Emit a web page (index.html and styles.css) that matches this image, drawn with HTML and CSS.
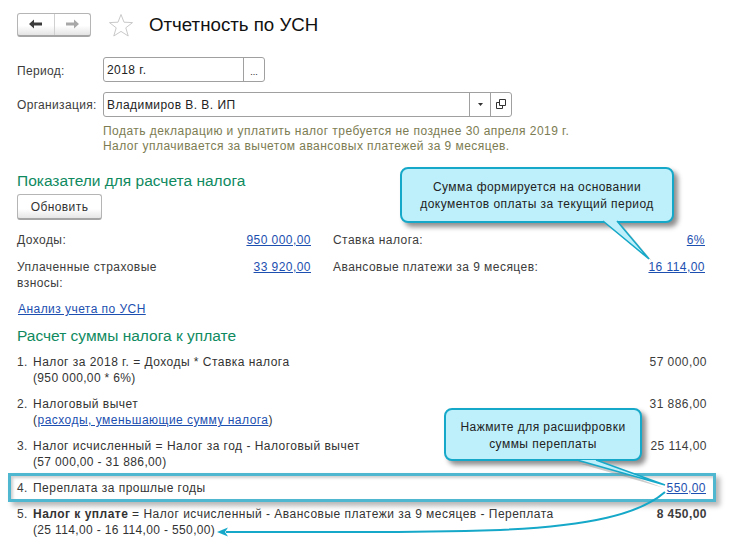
FILE: index.html
```html
<!DOCTYPE html>
<html lang="ru">
<head>
<meta charset="utf-8">
<title>Отчетность по УСН</title>
<link rel="stylesheet" href="styles.css">
</head>
<body>
<div class="page">
  <header class="head">
    <div class="nav">
      <span class="nav-cell">
        <svg width="16" height="12" viewBox="0 0 16 12"><path d="M1 6 L6 1.500 V4.500 H14 V7.500 H6 V10.500 Z" fill="#3a3a3a"/></svg>
      </span>
      <span class="nav-cell">
        <svg width="16" height="12" viewBox="0 0 16 12"><path d="M15 6 L10 1.500 V4.500 H2 V7.500 H10 V10.500 Z" fill="#a8a8a8"/></svg>
      </span>
    </div>
    <svg class="star" width="26" height="24" viewBox="0 0 26 24"><path d="M13 1.500 L16 9.200 L24.500 9.600 L17.800 14.800 L20.200 23 L13 18.400 L5.800 23 L8.200 14.800 L1.500 9.600 L10 9.200 Z" fill="none" stroke="#c9c9c9"/></svg>
    <h1 class="title">Отчетность по УСН</h1>
  </header>

  <div class="field first">
    <label class="field-label low">Период:</label>
    <div class="input period">
      <span class="input-text">2018 г.</span>
      <span class="input-btn dots">...</span>
    </div>
  </div>
  <div class="field second">
    <label class="field-label">Организация:</label>
    <div class="input org">
      <span class="input-text">Владимиров В. В. ИП</span>
      <span class="input-btn"><svg width="5" height="3" viewBox="0 0 5 3"><path d="M0 0 H5 L2.500 3 Z" fill="#333"/></svg></span>
      <span class="input-btn"><svg width="10" height="10" viewBox="0 0 10 10"><path d="M3.500 .5 H9.500 V6.500 H3.500 Z M3.500 3.500 H.5 V9.500 H6.500 V6.500" fill="none" stroke="#333"/></svg></span>
    </div>
  </div>
  <p class="note">Подать декларацию и уплатить налог требуется не позднее 30 апреля 2019 г.<br>Налог уплачивается за вычетом авансовых платежей за 9 месяцев.</p>

  <h2 class="section s1">Показатели для расчета налога</h2>
  <button class="refresh">Обновить</button>

  <div class="indicators">
    <div class="ind-col">
      <div class="ind-row r1"><span>Доходы:</span><a href="#" class="link">950 000,00</a></div>
      <div class="ind-row"><span class="wrap">Уплаченные страховые взносы:</span><a href="#" class="link">33 920,00</a></div>
    </div>
    <div class="ind-col">
      <div class="ind-row r1"><span>Ставка налога:</span><a href="#" class="link">6%</a></div>
      <div class="ind-row"><span>Авансовые платежи за 9 месяцев:</span><a href="#" class="link">16 114,00</a></div>
    </div>
  </div>
  <a href="#" class="link analysis">Анализ учета по УСН</a>

  <h2 class="section s2">Расчет суммы налога к уплате</h2>

  <ol class="calc">
    <li class="calc-row"><span class="num">1.</span><div class="calc-text">Налог за 2018 г. = Доходы * Ставка налога<br><span class="sum">(950 000,00 * 6%)</span></div><span class="val">57 000,00</span></li>
    <li class="calc-row"><span class="num">2.</span><div class="calc-text">Налоговый вычет<br>(<a href="#" class="link">расходы, уменьшающие сумму налога</a>)</div><span class="val">31 886,00</span></li>
    <li class="calc-row"><span class="num">3.</span><div class="calc-text">Налог исчисленный = Налог за год - Налоговый вычет<br><span class="sum">(57 000,00 - 31 886,00)</span></div><span class="val">25 114,00</span></li>
    <li class="calc-row single"><span class="num">4.</span><div class="calc-text">Переплата за прошлые годы</div><a href="#" class="link val inset">550,00</a></li>
    <li class="calc-row"><span class="num">5.</span><div class="calc-text"><b>Налог к уплате</b> = Налог исчисленный - Авансовые платежи за 9 месяцев - Переплата<br><span class="sum">(25 114,00 - 16 114,00 - 550,00)</span></div><b class="val">8 450,00</b></li>
  </ol>
</div>

<div class="highlight"></div>
<div class="callout c1">Сумма формируется на основании<br>документов оплаты за текущий период</div>
<div class="callout c2">Нажмите для расшифровки<br>суммы переплаты</div>
<svg class="arrows" width="731" height="542" viewBox="0 0 731 542">
  <path d="M606 224 L652 261 L621 224 Z" fill="#8f8f8f" opacity=".5"/>
  <path d="M603 221 L649 259 L617 221" fill="#bdf0fb" stroke="#16a8c8" stroke-width="1.500"/>
  <path d="M581 464 L664 488 L600 464 Z" fill="#8f8f8f" opacity=".45"/>
  <path d="M577 460 L665 485 L596 460" fill="#bdf0fb" stroke="#16a8c8" stroke-width="1.500"/>
  <path d="M665 492 C 640 514, 590 526, 500 530 Q 430 532 365 532 L226 532" fill="none" stroke="#16a8c8" stroke-width="2"/>
  <path d="M217 532 L228 527.500 L225 532 L228 536.500 Z" fill="#16a8c8"/>
</svg>
</body>
</html>
```
FILE: styles.css
```css
* { box-sizing: border-box; }
html, body { margin: 0; padding: 0; background: #fff; }
body { width: 731px; height: 542px; overflow: hidden; position: relative; font: 12px/16px "Liberation Sans", Arial, sans-serif; letter-spacing: .45px; color: #3c3c3c; }
.page { padding: 12px 24px 0 17px; }
.head { display: flex; align-items: center; height: 25px; }
.nav { display: flex; width: 74px; height: 24px; border: 1px solid #b5b5b5; border-bottom: 2px solid #a5a5a5; border-radius: 3px; background: linear-gradient(#fff 55%, #e4e4e4); }
.nav-cell { flex: 1; display: flex; align-items: center; justify-content: center; }
.nav-cell + .nav-cell { border-left: 1px solid #d0d0d0; }
.star { margin-left: 17px; }
.title { margin: 0 0 0 15px; padding-top: 1px; font-size: 18.7px; font-weight: 400; line-height: 24px; letter-spacing: 0; color: #111; }
.field { display: flex; align-items: center; height: 24px; }
.first { margin-top: 20px; }
.second { margin-top: 11px; }
.field-label { width: 86px; flex: none; letter-spacing: .33px; padding-top: 1px; }
.field-label.low { padding-top: 3px; }
.input { display: flex; height: 25px; border: 1px solid #a0a0a0; border-radius: 3px; align-items: stretch; color: #222; }
.period { width: 162px; }
.org { width: 409px; }
.input-text { flex: 1; padding: 4px 0 0 3px; }
.input-btn { width: 21px; flex: none; border-left: 1px solid #a0a0a0; display: flex; align-items: center; justify-content: center; }
.dots { align-items: flex-end; padding-bottom: 3px; font-size: 9px; line-height: 12px; letter-spacing: 0; }
.note { margin: 8px 0 0 86px; line-height: 15px; color: #7c7c52; }
.section { margin: 0; font-size: 15.5px; font-weight: 400; line-height: 20px; letter-spacing: 0; color: #0f8a5f; }
.s1 { margin-top: 17px; }
.refresh { display: block; margin-top: 3px; width: 85px; height: 26px; border: 1px solid #b5b5b5; border-bottom: 2px solid #a5a5a5; border-radius: 3px; background: linear-gradient(#fff 60%, #e6e6e6); font: inherit; letter-spacing: .42px; color: #333; padding: 0; }
.indicators { display: flex; margin-top: 12px; }
.ind-col { display: flex; flex-direction: column; }
.ind-col:first-child { width: 294px; }
.ind-col:last-child { width: 372px; margin-left: 22px; }
.ind-row { display: flex; justify-content: space-between; align-items: flex-start; height: 42px; }
.ind-row.r1 { height: 27px; }
.wrap { width: 165px; }
.link { color: #1c4fb0; text-decoration: underline; }
.analysis { display: inline-block; margin-left: 1px; }
.s2 { margin-top: 9px; }
.calc { list-style: none; margin: 8px 0 0; padding: 0; width: 690px; }
.calc-row { display: flex; align-items: flex-start; min-height: 42px; }
.calc-row.single { min-height: 26px; }
.num { width: 16px; flex: none; }
.calc-text { flex: 1; color: #333; letter-spacing: .48px; }
.sum { letter-spacing: .35px; }
.val { flex: none; }
.inset { margin-right: 1px; }
.highlight { position: absolute; left: 8px; top: 473px; width: 708px; height: 29px; border: 3px solid #4fb8d0; box-shadow: 4px 4px 5px #b8b8b8, inset 2px 2px 3px #d0d0d0; }
.arrows { position: absolute; left: 0; top: 0; }
.callout { position: absolute; display: flex; align-items: center; justify-content: center; text-align: center; padding-top: 2px; background: #bdf0fb; border: 2px solid #16a8c8; border-radius: 8px; box-shadow: 4px 4px 5px #8f8f8f; color: #222; line-height: 17px; }
.c1 { left: 400px; top: 167px; width: 274px; height: 56px; }
.c2 { left: 444px; top: 408px; width: 198px; height: 53px; }
```
